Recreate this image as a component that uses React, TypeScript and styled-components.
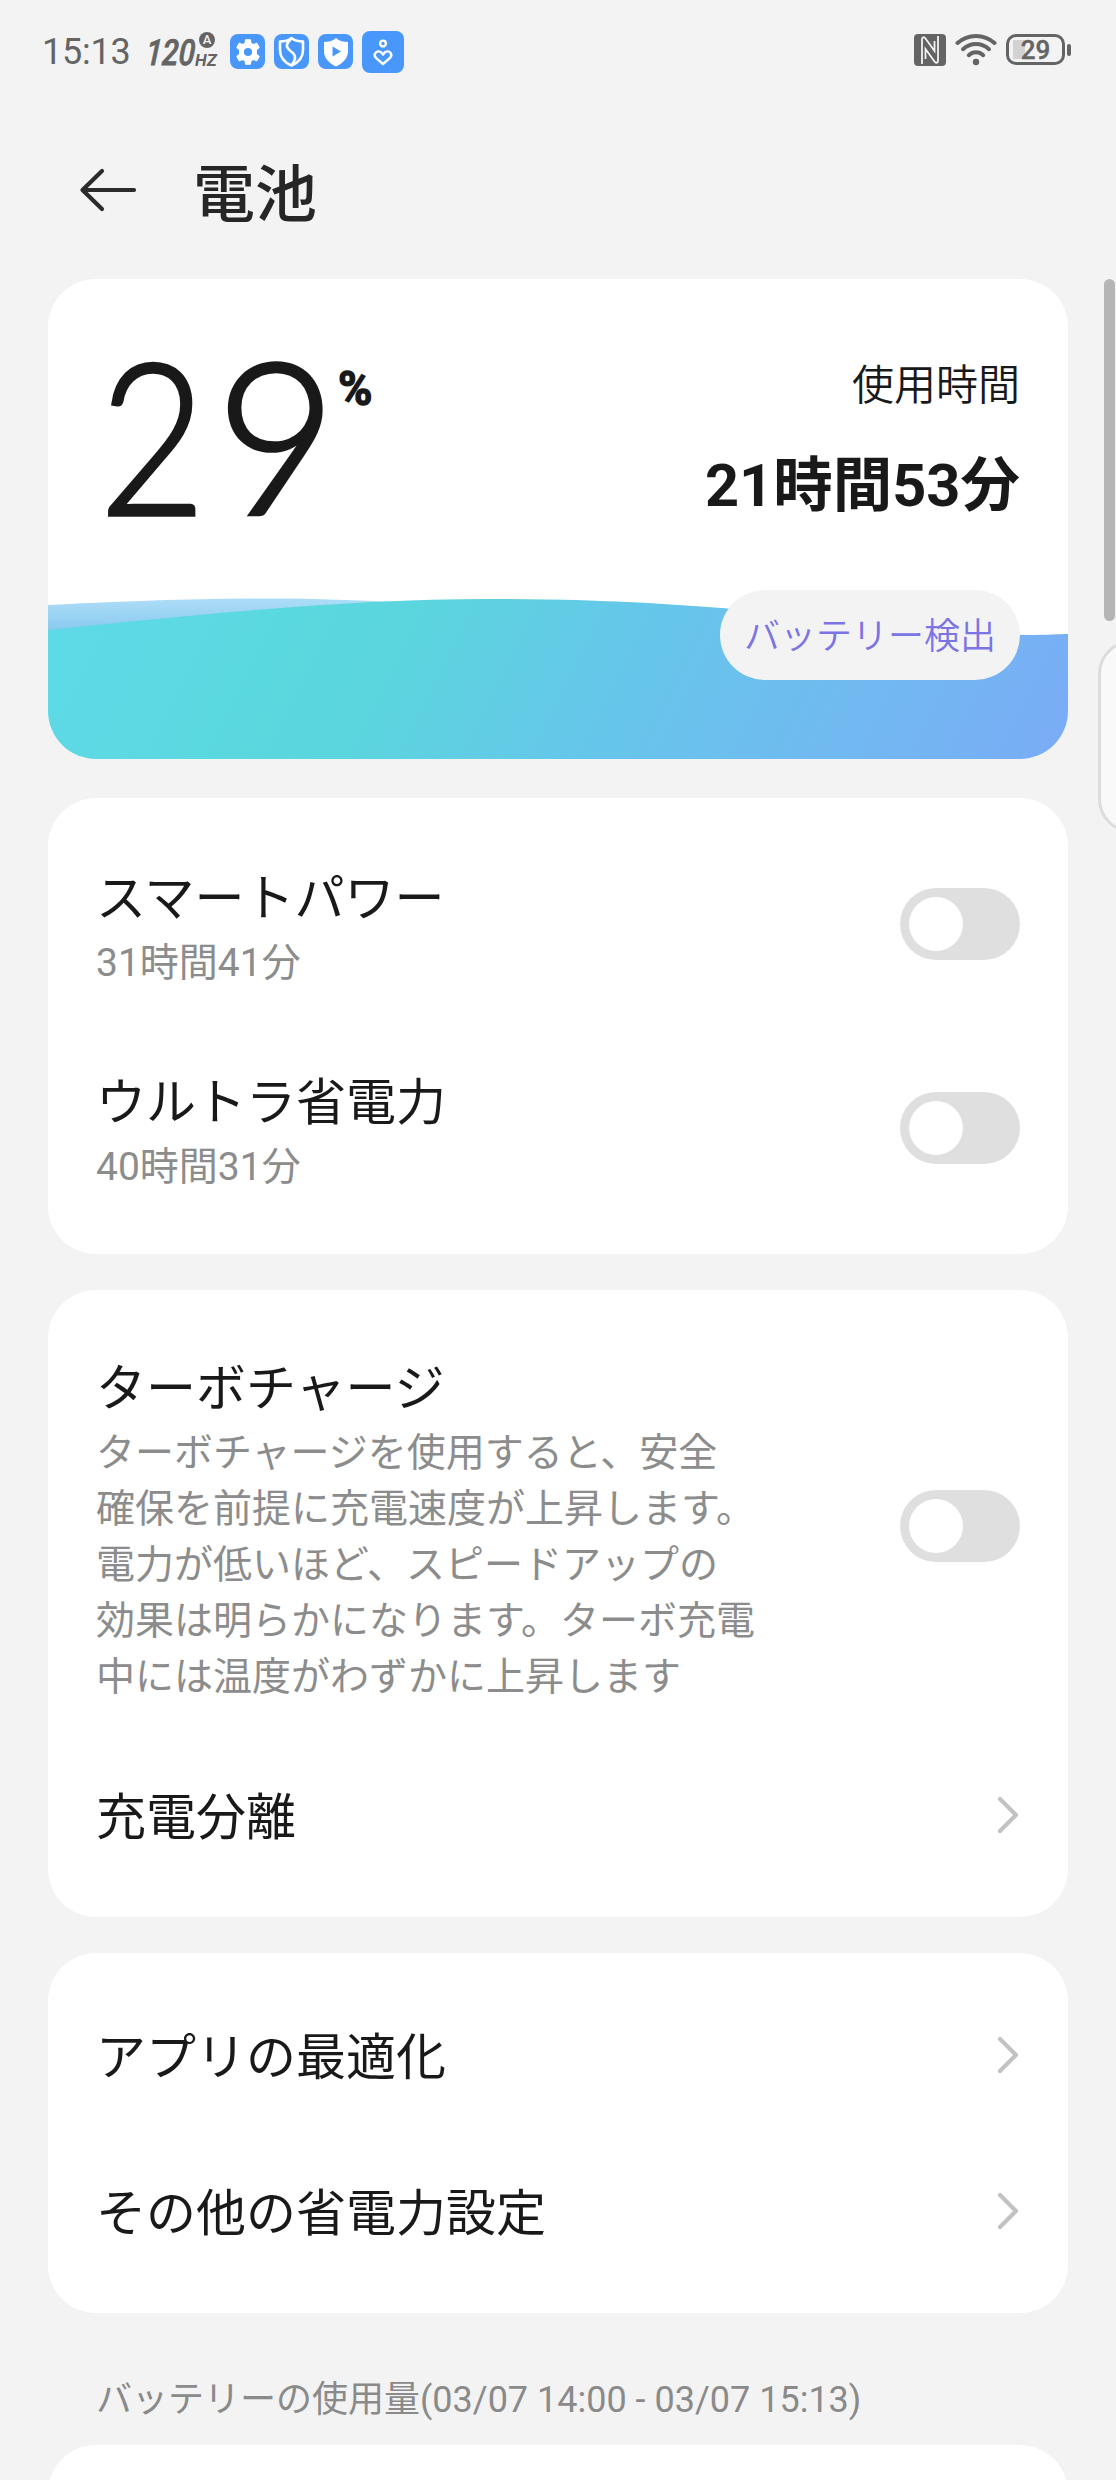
import React from "react";
import styled, { createGlobalStyle, css } from "styled-components";

const Global = createGlobalStyle`
  * { box-sizing: border-box; }
  html, body { margin: 0; padding: 0; }
  body {
    background: #f3f3f3;
    font-family: Roboto, "Noto Sans CJK JP", sans-serif;
    color: #191919;
  }
`;

const Screen = styled.div`
  position: relative;
  width: 1116px;
  height: 2480px;
  overflow: hidden;
  background: #f3f3f3;
  display: flex;
  flex-direction: column;
`;

const StatusBar = styled.header`
  flex: none;
  height: 102px;
  padding: 0 45px 0 42px;
  display: flex;
  align-items: center;
  justify-content: space-between;
  color: #646464;
`;

const StatusGroup = styled.div<{ $gap: number; $drop?: number }>`
  display: flex;
  align-items: center;
  gap: ${(p) => p.$gap}px;
  padding-top: ${(p) => p.$drop ?? 0}px;
  margin-top: ${(p) => (p.$drop ? 0 : -3)}px;
`;

const Clock = styled.span`
  width: 90px;
  font-size: 36px;
  line-height: 42px;
  letter-spacing: -0.2px;
`;

const RefreshRate = styled.div`
  position: relative;
  width: 74px;
  height: 36px;
  margin: 0 2px 0 4px;
  display: flex;
  align-items: flex-end;
`;

const RateValue = styled.span`
  font: italic 500 36px/34px Roboto, sans-serif;
  width: 50px;
  transform: skewX(-4deg) scaleX(0.82);
  transform-origin: left bottom;
  -webkit-text-stroke: 0.8px currentColor;
`;

const RateUnit = styled.span`
  font: italic 700 17px/19px Roboto, sans-serif;
`;

const RateBadge = styled.span`
  position: absolute;
  right: 4px;
  top: -2px;
  width: 16px;
  height: 16px;
  border-radius: 50%;
  background: #646464;
  color: #f3f3f3;
  font: 500 13px/16px Roboto, sans-serif;
  text-align: center;
`;

const AppTile = styled.span<{ $size: number }>`
  width: ${(p) => p.$size}px;
  height: ${(p) => p.$size}px;
  border-radius: 8px;
  background: #4a97fb;
  display: flex;
  align-items: center;
  justify-content: center;
`;

const BatteryBody = styled.div`
  width: 59px;
  height: 31px;
  border: 3px solid #646464;
  border-radius: 10px;
  background: linear-gradient(90deg, transparent 4px, #d2d2d2 4px, #d2d2d2 16px, transparent 16px) no-repeat center / 100% 19px;
  display: flex;
  align-items: center;
  justify-content: center;
  font-size: 26px;
  font-weight: 500;
  line-height: 26px;
  -webkit-text-stroke: 0.4px currentColor;
`;

const BatteryIndicator = styled.div`
  display: flex;
  align-items: center;
  gap: 2px;
`;

const BatteryTip = styled.span`
  width: 4px;
  height: 12px;
  border-radius: 2px;
  background: #646464;
`;

const TitleBar = styled.div`
  flex: none;
  height: 177px;
  padding: 0 0 2px 78px;
  display: flex;
  align-items: center;
  gap: 55px;
`;

const PageTitle = styled.h1`
  margin: 0;
  padding-top: 12px;
  font-size: 62px;
  font-weight: 500;
  line-height: 80px;
  color: #262626;
`;

const Cards = styled.main`
  flex: none;
  padding: 0 48px;
  display: flex;
  flex-direction: column;
`;

const cardBase = css`
  background: #fff;
  border-radius: 48px;
`;

const BatteryCard = styled.section`
  ${cardBase}
  position: relative;
  height: 480px;
  overflow: hidden;
  margin-bottom: 39px;
`;

const Wave = styled.svg`
  position: absolute;
  left: 0;
  bottom: 0;
  display: block;
`;

const BatteryInfo = styled.div`
  position: relative;
  height: 100%;
  padding: 0 48px 0 0;
  display: flex;
  justify-content: space-between;
  align-items: flex-start;
`;

const Level = styled.div`
  display: flex;
  align-items: flex-start;
  padding-left: 51px;
  color: #191919;
`;

const LevelDigit = styled.span<{ $width: number; $stretch: number }>`
  width: ${(p) => p.$width}px;
  margin-top: 44px;
  font: 300 212px/220px Lato, sans-serif;
  -webkit-text-stroke: 3.6px currentColor;
  stroke-linejoin: round;
  transform: scaleX(${(p) => p.$stretch});
  transform-origin: left;
`;

const LevelPercent = styled.span`
  margin: 85px 0 0 0;
  font: 700 49px/50px Roboto, sans-serif;
  -webkit-text-stroke: 1.4px currentColor;
  transform: scaleX(0.95);
  transform-origin: left;
`;

const Usage = styled.div`
  display: flex;
  flex-direction: column;
  align-items: flex-end;
`;

const UsageLabel = styled.span`
  margin-top: 77px;
  font-size: 42px;
  line-height: 60px;
  font-weight: 350;
`;

const UsageTime = styled.strong`
  margin-top: 30px;
  font-size: 59.5px;
  line-height: 80px;
  font-weight: 700;
`;

const CheckButton = styled.button`
  margin-top: 64px;
  width: 300px;
  height: 90px;
  padding: 4px 0 0;
  border: 0;
  border-radius: 45px;
  background: #f3f3f3;
  color: #7c74e4;
  font: 350 36px/86px Roboto, "Noto Sans CJK JP", sans-serif;
`;

const Card = styled.section<{ $gap: number }>`
  ${cardBase}
  padding: 24px 48px;
  margin-bottom: ${(p) => p.$gap}px;
`;

const Row = styled.div<{ $height: number }>`
  height: ${(p) => p.$height}px;
  display: flex;
  align-items: center;
  justify-content: space-between;
`;

const RowText = styled.div`
  display: flex;
  flex-direction: column;
`;

const RowTitle = styled.span`
  padding-top: 6px;
  font-size: 50px;
  line-height: 72px;
`;

const RowNote = styled.span`
  font-size: 39px;
  line-height: 56px;
  color: #8c8c8c;
`;

const Switch = styled.button`
  width: 120px;
  height: 72px;
  padding: 9px;
  border: 0;
  border-radius: 36px;
  background: #dfdfdf;
  display: flex;
`;

const Knob = styled.span`
  width: 54px;
  height: 54px;
  border-radius: 50%;
  background: #fff;
`;

const SectionLabel = styled.h2`
  margin: 0;
  height: 132px;
  padding: 59px 0 0 48px;
  font-size: 36px;
  line-height: 56px;
  font-weight: 400;
  color: #8a8a8a;
`;

const UsageCard = styled.section`
  ${cardBase}
  height: 120px;
`;

const ScrollThumb = styled.span`
  position: absolute;
  left: 1104px;
  top: 279px;
  width: 11px;
  height: 342px;
  border-radius: 6px;
  background: #b5b5b5;
`;

const EdgePanel = styled.span`
  position: absolute;
  left: 1098px;
  top: 640px;
  width: 80px;
  height: 193px;
  border: 3px solid #dcdcdc;
  border-radius: 34px;
  background: #f9f9f9;
`;

const ChevronSvg = styled.svg`
  display: block;
`;

function Chevron() {
  return (
    <ChevronSvg width="24" height="40" viewBox="0 0 24 40" fill="none">
      <path d="M4 4L20 20L4 36" stroke="#c2c2c2" strokeWidth="4.200" strokeLinecap="round" strokeLinejoin="round" />
    </ChevronSvg>
  );
}

function Toggle() {
  return (
    <Switch role="switch" aria-checked={false}>
      <Knob />
    </Switch>
  );
}

function GearIcon() {
  return (
    <svg width="28" height="28" viewBox="0 0 24 24">
      <path
        fill="#fff"
        fillRule="evenodd"
        d="M10 1.500h4l.6 3.100 1.900 1.100 3-1.100 2 3.500-2.400 2.100v3.600l2.400 2.100-2 3.500-3-1.100-1.900 1.100-.6 3.100h-4l-.6-3.100-1.900-1.100-3 1.100-2-3.500 2.400-2.100v-3.600L2.500 8.100l2-3.500 3 1.100 1.900-1.100zM12 8a4 4 0 1 0 0 8 4 4 0 0 0 0-8z"
        stroke="#fff"
        strokeWidth="1"
        strokeLinejoin="round"
      />
    </svg>
  );
}

function ShieldSwirlIcon() {
  return (
    <svg width="27" height="31" viewBox="0 0 27 31" fill="none" stroke="#fff" strokeWidth="2.6" strokeLinejoin="round" strokeLinecap="round">
      <path d="M13.500 2C17 5 21 5.500 25 5.500V14C25 21 20.500 26.500 13.500 29.500C6.500 26.500 2 21 2 14V5.500C6 5.500 10 5 13.500 2Z" />
      <path d="M12.500 3.500C7.500 8 8 11.500 12 14.500C17 18 19 21.500 14.500 28" />
    </svg>
  );
}

function ShieldPlayIcon() {
  return (
    <svg width="26" height="30" viewBox="0 0 26 30">
      <path fill="#fff" d="M13 1C16.500 4 20.500 5 25 5V14C25 21 20 26.500 13 29.500C6 26.500 1 21 1 14V5C5.500 5 9.500 4 13 1Z" />
      <path fill="#4a97fb" d="M9.500 9.500L18 14.500L9.500 19.500Z" />
    </svg>
  );
}

function CareIcon() {
  return (
    <svg width="22" height="28" viewBox="0 0 22 28" fill="none" stroke="#fff" strokeWidth="2.400" strokeLinejoin="round" strokeLinecap="round">
      <circle cx="11" cy="5.500" r="2.900" />
      <path d="M11 16.500C8.500 12.500 5 12.800 3.400 15C2 17 2.800 18.800 4.200 20.200L11 26L17.800 20.200C19.200 18.800 20 17 18.600 15C17 12.800 13.500 12.500 11 16.500Z" />
    </svg>
  );
}

function NfcIcon() {
  return (
    <svg width="32" height="32" viewBox="0 0 32 32">
      <rect width="32" height="32" rx="4" fill="#646464" />
      <path d="M8 30V5.500C8 3 10 2.500 11.500 4.500L20.500 17V7" fill="none" stroke="#f3f3f3" strokeWidth="1.800" />
      <path d="M24 2V26.500C24 29 22 29.500 20.500 27.500L11.500 15V25" fill="none" stroke="#f3f3f3" strokeWidth="1.800" />
    </svg>
  );
}

function WifiIcon() {
  return (
    <svg width="42" height="33" viewBox="0 0 42 33" fill="none" stroke="#646464" strokeWidth="4" strokeLinecap="round">
      <path d="M2.500 10C13 0.500 29 0.500 39.500 10" />
      <path d="M8 16.200C15.500 9.300 26.500 9.300 34 16.200" />
      <path d="M13.800 22.200C18 18.300 24 18.300 28.200 22.200" />
      <circle cx="21" cy="29" r="3.200" fill="#646464" stroke="none" />
    </svg>
  );
}

function BackArrow() {
  return (
    <svg width="60" height="44" viewBox="0 0 60 44" fill="none" stroke="#2b2b2b" strokeWidth="4.200" strokeLinecap="round" strokeLinejoin="round">
      <path d="M24 3L4.500 22L24 41M4.500 22H56" />
    </svg>
  );
}

function BatteryWave() {
  return (
    <Wave width="1020" height="162" viewBox="0 0 1020 162">
      <defs>
        <linearGradient id="front" gradientUnits="userSpaceOnUse" x1="0" y1="0" x2="900" y2="450">
          <stop offset="0" stopColor="#5edae8" />
          <stop offset="0.250" stopColor="#5ad8de" />
          <stop offset="0.330" stopColor="#5bd5de" />
          <stop offset="0.550" stopColor="#66c6ea" />
          <stop offset="0.770" stopColor="#71b9f1" />
          <stop offset="1" stopColor="#7baaf6" />
        </linearGradient>
        <linearGradient id="back" gradientUnits="userSpaceOnUse" x1="0" y1="4" x2="0" y2="36">
          <stop offset="0" stopColor="#abdcf7" />
          <stop offset="1" stopColor="#86c7ee" />
        </linearGradient>
      </defs>
      <path fill="url(#back)" d="M0 8C100 3 160 1.500 220 1.500C270 1.500 310 3.500 350 5V60H0Z" />
      <path fill="url(#front)" d="M0 33C130 19 300 2 440 2C560 2 640 8 720 15C820 25 900 39.500 980 38C1000 38 1010 37 1020 37V162H0Z" />
    </Wave>
  );
}

export default function App() {
  return (
    <>
      <Global />
      <Screen>
        <StatusBar>
          <StatusGroup $gap={9} $drop={1}>
            <Clock>15:13</Clock>
            <RefreshRate>
              <RateValue>120</RateValue>
              <RateUnit>HZ</RateUnit>
              <RateBadge>A</RateBadge>
            </RefreshRate>
            <AppTile $size={35}><GearIcon /></AppTile>
            <AppTile $size={35}><ShieldSwirlIcon /></AppTile>
            <AppTile $size={35}><ShieldPlayIcon /></AppTile>
            <AppTile $size={42}><CareIcon /></AppTile>
          </StatusGroup>
          <StatusGroup $gap={9}>
            <NfcIcon />
            <WifiIcon />
            <BatteryIndicator>
              <BatteryBody>29</BatteryBody>
              <BatteryTip />
            </BatteryIndicator>
          </StatusGroup>
        </StatusBar>

        <TitleBar>
          <BackArrow />
          <PageTitle>電池</PageTitle>
        </TitleBar>

        <Cards>
          <BatteryCard>
            <BatteryWave />
            <BatteryInfo>
              <Level>
                <LevelDigit $width={117} $stretch={0.87}>2</LevelDigit>
                <LevelDigit $width={122} $stretch={0.98}>9</LevelDigit>
                <LevelPercent>%</LevelPercent>
              </Level>
              <Usage>
                <UsageLabel>使用時間</UsageLabel>
                <UsageTime>21時間53分</UsageTime>
                <CheckButton>バッテリー検出</CheckButton>
              </Usage>
            </BatteryInfo>
          </BatteryCard>

          <Card $gap={36}>
            <Row $height={204}>
              <RowText>
                <RowTitle>スマートパワー</RowTitle>
                <RowNote>31時間41分</RowNote>
              </RowText>
              <Toggle />
            </Row>
            <Row $height={204}>
              <RowText>
                <RowTitle>ウルトラ省電力</RowTitle>
                <RowNote>40時間31分</RowNote>
              </RowText>
              <Toggle />
            </Row>
          </Card>

          <Card $gap={36}>
            <Row $height={423}>
              <RowText>
                <RowTitle>ターボチャージ</RowTitle>
                <RowNote>
                  ターボチャージを使用すると、安全<br />
                  確保を前提に充電速度が上昇します。<br />
                  電力が低いほど、スピードアップの<br />
                  効果は明らかになります。ターボ充電<br />
                  中には温度がわずかに上昇します
                </RowNote>
              </RowText>
              <Toggle />
            </Row>
            <Row $height={156}>
              <RowTitle>充電分離</RowTitle>
              <Chevron />
            </Row>
          </Card>

          <Card $gap={0}>
            <Row $height={156}>
              <RowTitle>アプリの最適化</RowTitle>
              <Chevron />
            </Row>
            <Row $height={156}>
              <RowTitle>その他の省電力設定</RowTitle>
              <Chevron />
            </Row>
          </Card>

          <SectionLabel>バッテリーの使用量(03/07 14:00 - 03/07 15:13)</SectionLabel>
          <UsageCard />
        </Cards>

        <ScrollThumb />
        <EdgePanel />
      </Screen>
    </>
  );
}
